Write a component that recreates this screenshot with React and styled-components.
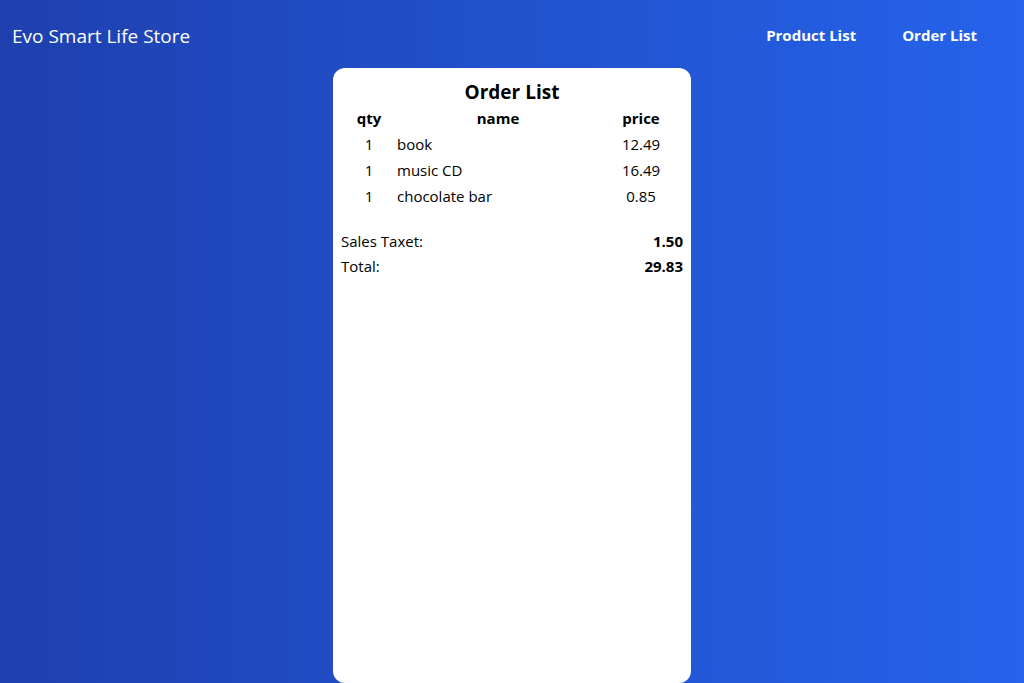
import React from "react";
import styled, { createGlobalStyle } from "styled-components";

const GlobalStyle = createGlobalStyle`
  html, body {
    margin: 0;
    padding: 0;
    height: 100%;
  }
  body {
    font-family: "Open Sans", "Noto Sans", sans-serif;
    overflow: hidden;
  }
`;

const orders = [
  { qty: 1, name: "book", price: "12.49" },
  { qty: 1, name: "music CD", price: "16.49" },
  { qty: 1, name: "chocolate bar", price: "0.85" },
];

const App = () => {
  return (
    <Page>
      <GlobalStyle />
      <Header>
        <Brand>Evo Smart Life Store</Brand>
        <Nav>
          <NavLink href="#">Product List</NavLink>
          <NavLink href="#">Order List</NavLink>
        </Nav>
      </Header>
      <Card>
        <Title>Order List</Title>
        <Table>
          <colgroup>
            <col style={{ width: 56 }} />
            <col style={{ width: 202 }} />
            <col style={{ width: 84 }} />
          </colgroup>
          <thead>
            <tr>
              <Th>qty</Th>
              <Th>name</Th>
              <Th>price</Th>
            </tr>
          </thead>
          <tbody>
            {orders.map((o) => (
              <tr key={o.name}>
                <Td>{o.qty}</Td>
                <Td align="left">{o.name}</Td>
                <Td>{o.price}</Td>
              </tr>
            ))}
          </tbody>
        </Table>
        <Summary>
          <SummaryRow>
            <span>Sales Taxet:</span>
            <strong>1.50</strong>
          </SummaryRow>
          <SummaryRow>
            <span>Total:</span>
            <strong>29.83</strong>
          </SummaryRow>
        </Summary>
      </Card>
    </Page>
  );
};

const Page = styled.div`
  height: 683px;
  background: linear-gradient(to right, #1e40af, #2563eb);
  display: flex;
  flex-direction: column;
  align-items: center;
  overflow: hidden;
`;

const Header = styled.header`
  width: 100%;
  box-sizing: border-box;
  height: 68px;
  padding: 0 12px;
  display: flex;
  align-items: center;
  justify-content: space-between;
  color: #fff;
`;

const Brand = styled.div`
  font-size: 19px;
  margin-top: 3px;
`;

const Nav = styled.nav`
  display: flex;
  gap: 46px;
  padding-right: 35px;
  margin-top: 2px;
`;

const NavLink = styled.a`
  color: #fff;
  text-decoration: none;
  font-weight: 700;
  font-size: 15px;
`;

const Card = styled.section`
  width: 358px;
  flex: 1;
  box-sizing: border-box;
  background: #fff;
  border-radius: 12px;
  padding: 11px 8px;
  color: #000;
`;

const Title = styled.h2`
  margin: 0;
  text-align: center;
  font-size: 19px;
  font-weight: 700;
  line-height: 26px;
`;

const Table = styled.table`
  width: 100%;
  border-collapse: collapse;
  table-layout: fixed;
  font-size: 15px;
`;

const Th = styled.th`
  padding: 0;
  height: 26px;
  font-weight: 700;
  text-align: center;
`;

const Td = styled.td`
  padding: 0;
  height: 26px;
  text-align: ${(p) => p.align || "center"};
`;

const Summary = styled.div`
  margin-top: 20px;
  display: flex;
  flex-direction: column;
  font-size: 15px;
`;

const SummaryRow = styled.div`
  display: flex;
  justify-content: space-between;
  line-height: 25px;
  strong {
    font-weight: 700;
  }
`;

export default App;
